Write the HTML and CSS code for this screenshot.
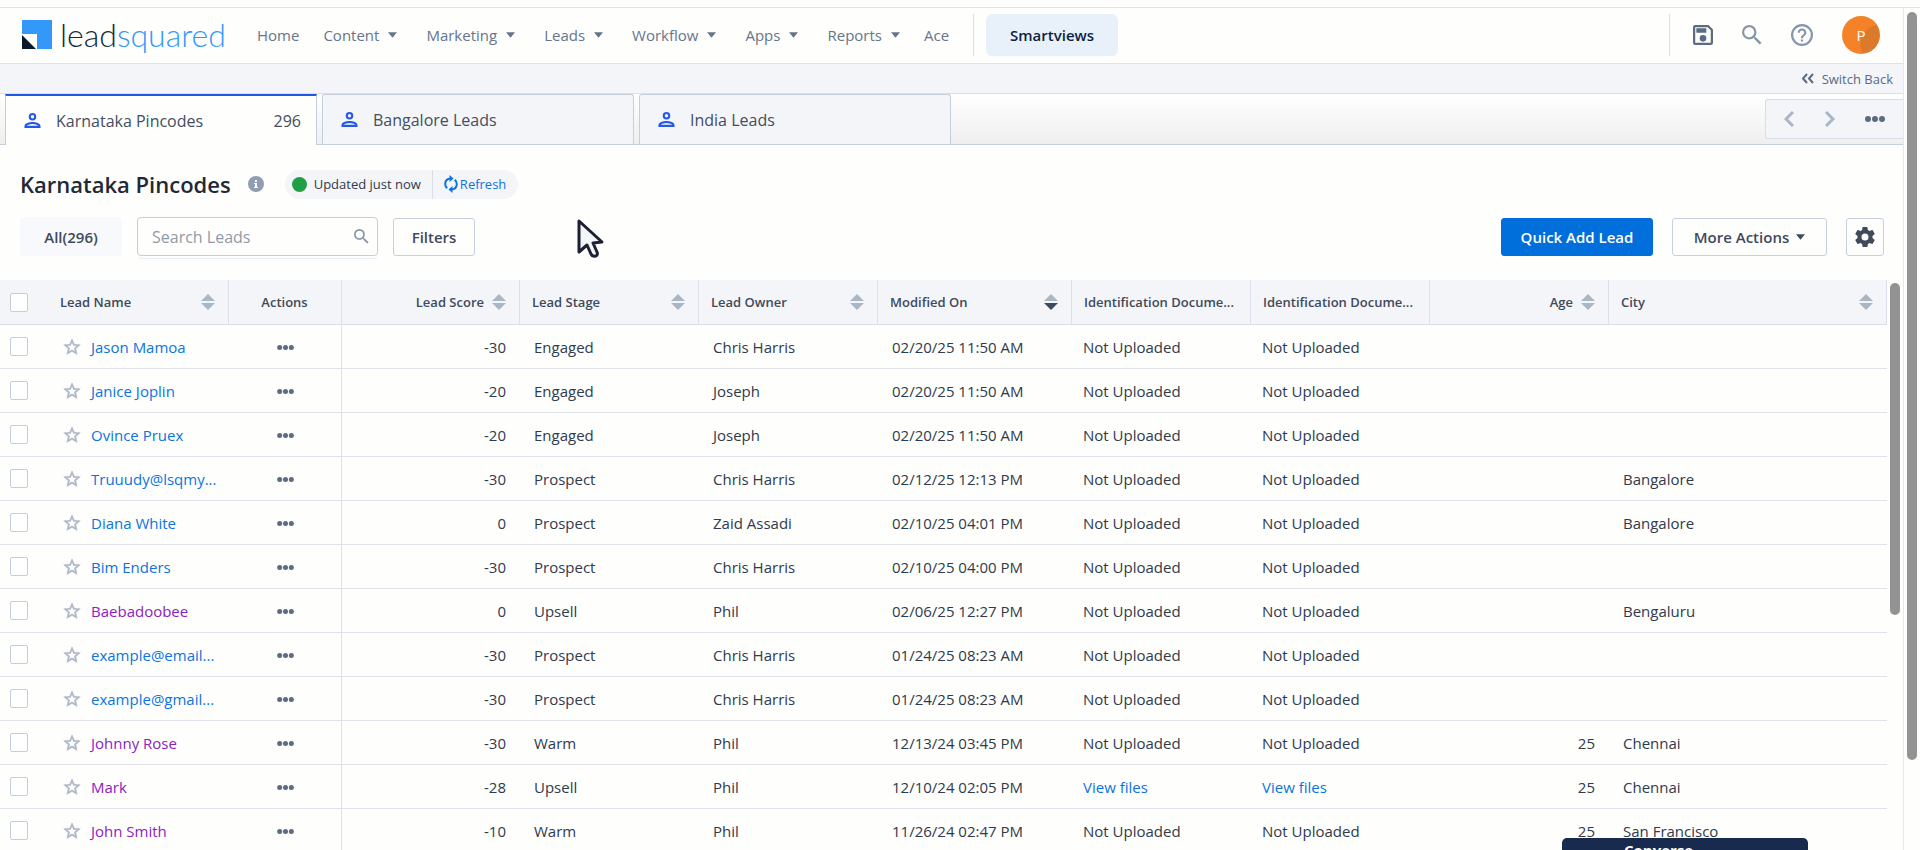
FILE: index.html
```html
<!DOCTYPE html>
<html lang="en">
<head>
<meta charset="UTF-8">
<meta name="viewport" content="width=device-width, initial-scale=1">
<title>Karnataka Pincodes - Smartviews</title>
<link rel="stylesheet" href="styles.css">
</head>
<body>

<!-- icon sprite -->
<svg class="sprite" aria-hidden="true">
  <symbol id="caret" viewBox="0 0 10 6"><path d="M0 0h10L5 6z"/></symbol>
  <symbol id="person" viewBox="0 0 18 18"><path d="M9 1a4 4 0 1 1 0 8 4 4 0 0 1 0-8zm0 2.200a1.800 1.800 0 1 0 0 3.600 1.800 1.800 0 0 0 0-3.600zM9 10.500c3.500 0 8.500 1.300 8.500 4.500v2H.5v-2c0-3.200 5-4.500 8.500-4.500zm0 2.200c-2.300 0-5 .8-6 1.800h12c-1-1-3.700-1.800-6-1.800z"/></symbol>
  <symbol id="star" viewBox="0 0 24 24"><path d="M22 9.240l-7.190-.62L12 2 9.190 8.630 2 9.240l5.460 4.730L5.820 21 12 17.270 18.180 21l-1.630-7.030L22 9.240zM12 15.400l-3.760 2.270 1-4.280-3.320-2.880 4.380-.38L12 6.100l1.710 4.040 4.380.38-3.320 2.880 1 4.280L12 15.400z" stroke="currentColor" stroke-width=".5"/></symbol>
  <symbol id="dots" viewBox="0 0 20 6"><circle cx="3" cy="3" r="3"/><circle cx="10" cy="3" r="3"/><circle cx="17" cy="3" r="3"/></symbol>
  <symbol id="sort" viewBox="0 0 14 18"><path d="M7 1l7 7H0z"/><path class="down" d="M7 17l7-7H0z"/></symbol>
  <symbol id="magnify" viewBox="3 3 18 18"><path d="M15.500 14h-.79l-.28-.27A6.470 6.470 0 0 0 16 9.500 6.500 6.500 0 1 0 9.500 16c1.610 0 3.090-.59 4.230-1.570l.27.28v.79l5 4.990L20.490 19l-4.990-5zm-6 0C7.010 14 5 11.990 5 9.500S7.010 5 9.500 5 14 7.010 14 9.500 11.990 14 9.500 14z"/></symbol>
</svg>

<div class="page">
  <div class="app">

    <header class="topbar">
      <a class="logo" href="#" aria-label="leadsquared">
        <svg width="30" height="29" viewBox="0 0 30 29"><path d="M0 0h30v29H15V14H0z" fill="#3498fb"/><path d="M0 15v14h14z" fill="#08192e"/></svg>
        <span class="wordmark">lead<span>squared</span></span>
      </a>
      <nav class="nav">
        <a href="#">Home</a>
        <a href="#" class="drop">Content <svg class="caret"><use href="#caret"/></svg></a>
        <a href="#" class="drop">Marketing <svg class="caret"><use href="#caret"/></svg></a>
        <a href="#" class="drop">Leads <svg class="caret"><use href="#caret"/></svg></a>
        <a href="#" class="drop">Workflow <svg class="caret"><use href="#caret"/></svg></a>
        <a href="#" class="drop">Apps <svg class="caret"><use href="#caret"/></svg></a>
        <a href="#" class="drop">Reports <svg class="caret"><use href="#caret"/></svg></a>
        <a href="#">Ace</a>
      </nav>
      <div class="smart"><a href="#" class="smart-link">Smartviews</a></div>
      <div class="tools">
        <button class="icon-btn dark" aria-label="Save"><svg width="20" height="20" viewBox="3 3 18 18"><path d="M17 3H5a2 2 0 0 0-2 2v14a2 2 0 0 0 2 2h14a2 2 0 0 0 2-2V7zM5 5h11.200L19 7.800V19H5zM6 6h9v4H6zM12 12a3 3 0 1 0 0 6 3 3 0 0 0 0-6z" fill-rule="evenodd"/></svg></button>
        <button class="icon-btn" aria-label="Search"><svg width="20" height="20"><use href="#magnify"/></svg></button>
        <button class="icon-btn" aria-label="Help"><svg width="22" height="22" viewBox="2 2 20 20"><path d="M11 18h2v-2h-2v2zm1-16a10 10 0 1 0 0 20 10 10 0 0 0 0-20zm0 18a8 8 0 1 1 0-16 8 8 0 0 1 0 16zm0-14a4 4 0 0 0-4 4h2c0-1.100.9-2 2-2s2 .9 2 2c0 2-3 1.750-3 5h2c0-2.250 3-2.500 3-5a4 4 0 0 0-4-4z"/></svg></button>
        <button class="avatar">P</button>
      </div>
    </header>

    <div class="switch">
      <a href="#"><svg width="13" height="11" viewBox="0 0 13 11"><path d="M6 1L2 5.500 6 10M12 1L8 5.500l4 4.500" fill="none" stroke="currentColor" stroke-width="2"/></svg>Switch Back</a>
    </div>

    <div class="tabs">
      <a href="#" class="tab active"><svg class="person"><use href="#person"/></svg>Karnataka Pincodes<span class="count">296</span></a>
      <a href="#" class="tab"><svg class="person"><use href="#person"/></svg>Bangalore Leads</a>
      <a href="#" class="tab"><svg class="person"><use href="#person"/></svg>India Leads</a>
      <div class="tab-nav">
        <button aria-label="Previous"><svg width="10" height="16" viewBox="0 0 10 16"><path d="M9 1L2 8l7 7" fill="none" stroke="#a9b6c6" stroke-width="3"/></svg></button>
        <button aria-label="Next"><svg width="10" height="16" viewBox="0 0 10 16"><path d="M1 1l7 7-7 7" fill="none" stroke="#a9b6c6" stroke-width="3"/></svg></button>
        <button aria-label="More tabs"><svg width="20" height="6"><use href="#dots"/></svg></button>
      </div>
    </div>

    <main>
      <div class="title-row">
        <h1>Karnataka Pincodes</h1>
        <svg class="info" width="16" height="16" viewBox="0 0 16 16"><circle cx="8" cy="8" r="8" fill="#8f9eb0"/><path d="M7 4h2v2H7zM6 7h3v4h1v1H6v-1h1V8H6z" fill="#fff"/></svg>
        <div class="status">
          <span class="updated"><i class="dot"></i>Updated just now</span>
          <button class="refresh"><svg width="14" height="18" viewBox="0 0 14 18"><path d="M6 3.500C3 4 1.200 6.300 1.200 9c0 1.800.8 3.200 2 4.300M8 14.500c3-.5 4.800-2.800 4.800-5.500 0-1.800-.8-3.200-2-4.300" fill="none" stroke="currentColor" stroke-width="2"/><path d="M5.500 0l4 3.500-4 3.500zM8.500 18l-4-3.500 4-3.500z"/></svg>Refresh</button>
        </div>
      </div>

      <div class="toolbar">
        <button class="all">All(296)</button>
        <div class="search">
          <input type="text" placeholder="Search Leads" aria-label="Search Leads">
          <svg width="15" height="15"><use href="#magnify"/></svg>
        </div>
        <button class="btn filters">Filters</button>
        <div class="actions">
          <button class="btn primary">Quick Add Lead</button>
          <button class="btn more">More Actions <svg class="caret"><use href="#caret"/></svg></button>
          <button class="btn gear" aria-label="Settings"><svg width="20" height="20" viewBox="2 2 20 20"><path d="M19.430 12.980c.04-.32.07-.64.07-.98s-.03-.66-.07-.98l2.110-1.650c.19-.15.24-.42.12-.64l-2-3.460c-.12-.22-.39-.3-.61-.22l-2.490 1c-.52-.4-1.080-.73-1.690-.98l-.38-2.650A.49.49 0 0 0 14 2h-4c-.25 0-.46.18-.49.42l-.38 2.650c-.61.25-1.170.59-1.690.98l-2.490-1c-.23-.09-.49 0-.61.22l-2 3.460c-.13.22-.07.49.12.64l2.110 1.650c-.04.32-.07.65-.07.98s.03.66.07.98l-2.110 1.650c-.19.15-.24.42-.12.64l2 3.460c.12.22.39.3.61.22l2.490-1c.52.4 1.080.73 1.690.98l.38 2.650c.03.24.24.42.49.42h4c.25 0 .46-.18.49-.42l.38-2.650c.61-.25 1.170-.59 1.690-.98l2.490 1c.23.09.49 0 .61-.22l2-3.460c.12-.22.07-.49-.12-.64l-2.110-1.650zM12 15.500a3.500 3.500 0 1 1 0-7 3.500 3.500 0 0 1 0 7z"/></svg></button>
        </div>
      </div>

      <div class="grid">
        <table>
          <colgroup>
            <col class="c-name"><col class="c-actions"><col class="c-score"><col class="c-std"><col class="c-std"><col class="c-modified"><col class="c-std"><col class="c-std"><col class="c-std"><col>
          </colgroup>
          <thead>
            <tr>
              <th><div class="th"><input type="checkbox" aria-label="Select all"><span class="grow name-label">Lead Name</span><svg class="sort"><use href="#sort"/></svg></div></th>
              <th class="mid">Actions</th>
              <th><div class="th end">Lead Score<svg class="sort"><use href="#sort"/></svg></div></th>
              <th><div class="th"><span class="grow">Lead Stage</span><svg class="sort"><use href="#sort"/></svg></div></th>
              <th><div class="th"><span class="grow">Lead Owner</span><svg class="sort"><use href="#sort"/></svg></div></th>
              <th><div class="th"><span class="grow">Modified On</span><svg class="sort desc"><use href="#sort"/></svg></div></th>
              <th><div class="th">Identification Docume...</div></th>
              <th><div class="th">Identification Docume...</div></th>
              <th><div class="th end">Age<svg class="sort"><use href="#sort"/></svg></div></th>
              <th><div class="th"><span class="grow">City</span><svg class="sort"><use href="#sort"/></svg></div></th>
            </tr>
          </thead>
          <tbody>
            <tr>
              <td><div class="lead"><input type="checkbox" aria-label="Select Jason Mamoa"><svg class="star"><use href="#star"/></svg><a href="#">Jason Mamoa</a></div></td>
              <td class="mid"><button class="row-menu" aria-label="Row actions"><svg width="17" height="5"><use href="#dots"/></svg></button></td>
              <td class="num">-30</td><td>Engaged</td><td>Chris Harris</td><td>02/20/25 11:50 AM</td><td class="file">Not Uploaded</td><td class="file">Not Uploaded</td><td class="num"></td><td></td>
            </tr>
            <tr>
              <td><div class="lead"><input type="checkbox" aria-label="Select Janice Joplin"><svg class="star"><use href="#star"/></svg><a href="#">Janice Joplin</a></div></td>
              <td class="mid"><button class="row-menu" aria-label="Row actions"><svg width="17" height="5"><use href="#dots"/></svg></button></td>
              <td class="num">-20</td><td>Engaged</td><td>Joseph</td><td>02/20/25 11:50 AM</td><td class="file">Not Uploaded</td><td class="file">Not Uploaded</td><td class="num"></td><td></td>
            </tr>
            <tr>
              <td><div class="lead"><input type="checkbox" aria-label="Select Ovince Pruex"><svg class="star"><use href="#star"/></svg><a href="#">Ovince Pruex</a></div></td>
              <td class="mid"><button class="row-menu" aria-label="Row actions"><svg width="17" height="5"><use href="#dots"/></svg></button></td>
              <td class="num">-20</td><td>Engaged</td><td>Joseph</td><td>02/20/25 11:50 AM</td><td class="file">Not Uploaded</td><td class="file">Not Uploaded</td><td class="num"></td><td></td>
            </tr>
            <tr>
              <td><div class="lead"><input type="checkbox" aria-label="Select Truuudy"><svg class="star"><use href="#star"/></svg><a href="#">Truuudy@lsqmy...</a></div></td>
              <td class="mid"><button class="row-menu" aria-label="Row actions"><svg width="17" height="5"><use href="#dots"/></svg></button></td>
              <td class="num">-30</td><td>Prospect</td><td>Chris Harris</td><td>02/12/25 12:13 PM</td><td class="file">Not Uploaded</td><td class="file">Not Uploaded</td><td class="num"></td><td>Bangalore</td>
            </tr>
            <tr>
              <td><div class="lead"><input type="checkbox" aria-label="Select Diana White"><svg class="star"><use href="#star"/></svg><a href="#">Diana White</a></div></td>
              <td class="mid"><button class="row-menu" aria-label="Row actions"><svg width="17" height="5"><use href="#dots"/></svg></button></td>
              <td class="num">0</td><td>Prospect</td><td>Zaid Assadi</td><td>02/10/25 04:01 PM</td><td class="file">Not Uploaded</td><td class="file">Not Uploaded</td><td class="num"></td><td>Bangalore</td>
            </tr>
            <tr>
              <td><div class="lead"><input type="checkbox" aria-label="Select Bim Enders"><svg class="star"><use href="#star"/></svg><a href="#">Bim Enders</a></div></td>
              <td class="mid"><button class="row-menu" aria-label="Row actions"><svg width="17" height="5"><use href="#dots"/></svg></button></td>
              <td class="num">-30</td><td>Prospect</td><td>Chris Harris</td><td>02/10/25 04:00 PM</td><td class="file">Not Uploaded</td><td class="file">Not Uploaded</td><td class="num"></td><td></td>
            </tr>
            <tr>
              <td><div class="lead"><input type="checkbox" aria-label="Select Baebadoobee"><svg class="star"><use href="#star"/></svg><a href="#" class="seen">Baebadoobee</a></div></td>
              <td class="mid"><button class="row-menu" aria-label="Row actions"><svg width="17" height="5"><use href="#dots"/></svg></button></td>
              <td class="num">0</td><td>Upsell</td><td>Phil</td><td>02/06/25 12:27 PM</td><td class="file">Not Uploaded</td><td class="file">Not Uploaded</td><td class="num"></td><td>Bengaluru</td>
            </tr>
            <tr>
              <td><div class="lead"><input type="checkbox" aria-label="Select example@email"><svg class="star"><use href="#star"/></svg><a href="#">example@email...</a></div></td>
              <td class="mid"><button class="row-menu" aria-label="Row actions"><svg width="17" height="5"><use href="#dots"/></svg></button></td>
              <td class="num">-30</td><td>Prospect</td><td>Chris Harris</td><td>01/24/25 08:23 AM</td><td class="file">Not Uploaded</td><td class="file">Not Uploaded</td><td class="num"></td><td></td>
            </tr>
            <tr>
              <td><div class="lead"><input type="checkbox" aria-label="Select example@gmail"><svg class="star"><use href="#star"/></svg><a href="#">example@gmail...</a></div></td>
              <td class="mid"><button class="row-menu" aria-label="Row actions"><svg width="17" height="5"><use href="#dots"/></svg></button></td>
              <td class="num">-30</td><td>Prospect</td><td>Chris Harris</td><td>01/24/25 08:23 AM</td><td class="file">Not Uploaded</td><td class="file">Not Uploaded</td><td class="num"></td><td></td>
            </tr>
            <tr>
              <td><div class="lead"><input type="checkbox" aria-label="Select Johnny Rose"><svg class="star"><use href="#star"/></svg><a href="#" class="seen">Johnny Rose</a></div></td>
              <td class="mid"><button class="row-menu" aria-label="Row actions"><svg width="17" height="5"><use href="#dots"/></svg></button></td>
              <td class="num">-30</td><td>Warm</td><td>Phil</td><td>12/13/24 03:45 PM</td><td class="file">Not Uploaded</td><td class="file">Not Uploaded</td><td class="num">25</td><td>Chennai</td>
            </tr>
            <tr>
              <td><div class="lead"><input type="checkbox" aria-label="Select Mark"><svg class="star"><use href="#star"/></svg><a href="#" class="seen">Mark</a></div></td>
              <td class="mid"><button class="row-menu" aria-label="Row actions"><svg width="17" height="5"><use href="#dots"/></svg></button></td>
              <td class="num">-28</td><td>Upsell</td><td>Phil</td><td>12/10/24 02:05 PM</td><td class="file"><a href="#">View files</a></td><td class="file"><a href="#">View files</a></td><td class="num">25</td><td>Chennai</td>
            </tr>
            <tr>
              <td><div class="lead"><input type="checkbox" aria-label="Select John Smith"><svg class="star"><use href="#star"/></svg><a href="#" class="seen">John Smith</a></div></td>
              <td class="mid"><button class="row-menu" aria-label="Row actions"><svg width="17" height="5"><use href="#dots"/></svg></button></td>
              <td class="num">-10</td><td>Warm</td><td>Phil</td><td>11/26/24 02:47 PM</td><td class="file">Not Uploaded</td><td class="file">Not Uploaded</td><td class="num">25</td><td>San Francisco</td>
            </tr>
          </tbody>
        </table>
        <div class="grid-scroll"><div class="thumb"></div></div>
      </div>
    </main>
  </div>
  <div class="page-scroll"><div class="thumb"></div></div>
</div>

<button class="converse">Converse</button>

<svg class="pointer" width="28" height="42" viewBox="0 0 28 42"><path d="M3 3v31l8-7 4 9c2 4 8 2 6-2l-4-9 9-1z" fill="#f4f5f8" stroke="#1b2133" stroke-width="3" stroke-linejoin="round"/></svg>

</body>
</html>
```
FILE: styles.css
```css
* {
  box-sizing: border-box;
}
body {
  margin: 0;
  height: 100vh;
  overflow: hidden;
  display: flex;
  flex-direction: column;
  background: #fefefd;
  color: #2f3a4c;
  font-family: "Open Sans", "Noto Sans", sans-serif;
  font-size: 15px;
  line-height: 20px;
}
body::before {
  content: "";
  flex: none;
  height: 7px;
  border-bottom: 1px solid #e0e2e8;
}
a {
  color: #0b74dd;
  text-decoration: none;
}
button {
  font: inherit;
  color: inherit;
  background: none;
  border: 0;
  padding: 0;
}
svg {
  fill: currentColor;
  flex: none;
}
.sprite {
  position: absolute;
  width: 0;
  height: 0;
}
.page {
  display: flex;
  flex: 1;
  min-height: 0;
}
.app {
  flex: 1;
  min-width: 0;
  overflow: hidden;
  border-right: 1px solid #e8e9ee;
}

/* top bar */
.topbar {
  display: flex;
  align-items: center;
  height: 56px;
  padding: 0 23px 2px 22px;
  border-bottom: 1px solid #dce3ee;
}
.logo {
  display: flex;
  align-items: center;
  gap: 8px;
  width: 235px;
}
.wordmark {
  font-family: Lato, sans-serif;
  font-weight: 300;
  font-size: 32px;
  line-height: 32px;
  color: #12283f;
}
.wordmark span {
  color: #3498fb;
}
.nav {
  display: flex;
  gap: 24px;
}
.nav a {
  display: flex;
  align-items: center;
  gap: 9px;
  color: #66758a;
}
.nav .drop + .drop {
  margin-left: 5px;
}
.caret {
  width: 9px;
  height: 6px;
}
.smart {
  margin-left: 24px;
  padding-left: 12px;
  border-left: 1px solid #d9deea;
}
.smart-link {
  display: block;
  padding: 11px 24px;
  border-radius: 6px;
  background: #e8f1f9;
  color: #0c1f3d;
  font-weight: 600;
}
.tools {
  display: flex;
  align-items: center;
  gap: 29px;
  height: 42px;
  margin-left: auto;
  padding-left: 23px;
  border-left: 1px solid #d9deea;
}
.icon-btn {
  display: flex;
  color: #8496ab;
}
.icon-btn.dark {
  color: #5a6b82;
}
.avatar {
  width: 38px;
  height: 38px;
  border-radius: 50%;
  background: radial-gradient(circle at 38px 28px, #dc7a2c 19px, #f58228 20px);
  color: #fff;
}

.switch {
  display: flex;
  justify-content: flex-end;
  align-items: center;
  height: 30px;
  padding-right: 10px;
  background: #f4f5f9;
  border-bottom: 1px solid #dcdfea;
}
.switch a {
  display: flex;
  align-items: center;
  gap: 8px;
  color: #5a6b82;
  font-size: 13px;
}

/* tabs */
.tabs {
  display: flex;
  align-items: flex-end;
  gap: 5px;
  height: 51px;
  padding-left: 5px;
  background: linear-gradient(#fff, #f0efef);
  border-bottom: 1px solid #c5cfdc;
}
.tab {
  display: flex;
  align-items: center;
  gap: 15px;
  width: 312px;
  height: 50px;
  padding: 0 15px 0 18px;
  background: #f4f5f9;
  border: 1px solid #c5cfdc;
  border-bottom: 0;
  border-radius: 3px 3px 0 0;
  color: #434e5f;
  font-size: 16px;
}
.tab.active {
  height: 51px;
  margin-bottom: -1px;
  background: #fefefd;
  border-top: 2px solid #1f57e7;
  border-radius: 0;
}
.person {
  width: 17px;
  height: 17px;
  color: #2559ea;
}
.count {
  margin-left: auto;
}
.tab-nav {
  display: flex;
  align-self: center;
  align-items: center;
  justify-content: space-between;
  width: 138px;
  height: 40px;
  margin-left: auto;
  padding: 0 18px;
  background: #f4f5f9;
  border: 1px solid #d5deea;
  border-right: 0;
  border-radius: 3px 0 0 3px;
  color: #5a6b82;
}
.tab-nav button {
  display: flex;
}

/* title + toolbar */
.title-row {
  display: flex;
  align-items: center;
  padding: 24px 0 0 20px;
}
h1 {
  margin: 0;
  font-size: 22px;
  line-height: 30px;
  font-weight: 600;
  color: #1f2937;
}
.info {
  margin: 0 21px 0 17px;
}
.status {
  display: flex;
  align-items: center;
  height: 29px;
  border-radius: 15px;
  background: #f4f5f9;
  font-size: 13px;
}
.updated,
.refresh {
  display: flex;
  align-items: center;
  height: 29px;
}
.updated {
  gap: 7px;
  padding: 0 11px 0 7px;
  border-right: 1px solid #d9dfe9;
}
.dot {
  width: 15px;
  height: 15px;
  border-radius: 50%;
  background: #1fa045;
}
.refresh {
  gap: 2px;
  padding: 0 12px 0 11px;
  color: #0b74dd;
}
.toolbar {
  display: flex;
  align-items: center;
  gap: 15px;
  padding: 18px 19px 24px 20px;
}
.all {
  width: 102px;
  height: 39px;
  border-radius: 3px;
  background: #f8f9fc;
  color: #3f4a5b;
  font-weight: 600;
}
.search {
  display: flex;
  align-items: center;
  width: 241px;
  height: 39px;
  padding: 0 8px 0 14px;
  border: 1px solid #c1cedc;
  border-radius: 4px;
  box-shadow: 0 3px 0 -1px #fefefd, 0 4px 0 -1px #e4eef7;
  color: #8496a5;
}
.search input {
  flex: 1;
  min-width: 0;
  padding: 0;
  border: 0;
  outline: 0;
  background: none;
  font: inherit;
  font-size: 16px;
}
.search input::placeholder {
  color: #8f9ba8;
}
.btn {
  height: 38px;
  border: 1px solid #c5d1de;
  border-radius: 3px;
  color: #3f4a5b;
  font-weight: 600;
}
.filters {
  width: 82px;
}
.actions {
  display: flex;
  gap: 19px;
  margin-left: auto;
}
.primary {
  width: 152px;
  border-color: #006fdb;
  background: #006fdb;
  color: #fff;
}
.more {
  display: flex;
  align-items: center;
  justify-content: center;
  gap: 7px;
  width: 155px;
}
.gear {
  display: flex;
  align-items: center;
  justify-content: center;
  width: 38px;
}

/* leads grid */
.grid {
  display: flex;
}
table {
  flex: 1;
  width: 100%;
  min-width: 0;
  table-layout: fixed;
  border-collapse: separate;
  border-spacing: 0;
}
.c-name {
  width: 229px;
}
.c-actions {
  width: 113px;
}
.c-score {
  width: 178px;
}
.c-std {
  width: 179px;
}
.c-modified {
  width: 194px;
}
th {
  height: 45px;
  padding: 0 13px 0 12px;
  background: #f4f5f9;
  border-right: 1px solid #dcdfea;
  border-bottom: 1px solid #dcdfea;
  color: #3f4a5b;
  font-size: 13px;
  font-weight: 600;
  text-align: left;
  white-space: nowrap;
}
th:first-child,
td:first-child {
  padding-left: 10px;
}
.th {
  display: flex;
  align-items: center;
  gap: 8px;
}
.end {
  justify-content: flex-end;
}
.grow {
  flex: 1;
}
.name-label {
  padding-left: 24px;
}
.sort {
  width: 14px;
  height: 18px;
  color: #a9b7c5;
}
.sort.desc {
  --down: #3f4a5b;
}
.down {
  fill: var(--down, currentColor);
}
td {
  height: 44px;
  padding: 0 14px;
  border-bottom: 1px solid #dfe1eb;
  white-space: nowrap;
}
.mid {
  text-align: center;
}
td.mid {
  border-right: 1px solid #dcdfea;
}
.num {
  text-align: right;
}
.file {
  padding: 0 11px;
}
.lead {
  display: flex;
  align-items: center;
}
input[type="checkbox"] {
  appearance: none;
  flex: none;
  width: 18px;
  height: 19px;
  margin: 0;
  border: 1px solid #c3cedd;
  border-radius: 2px;
  background: #fff;
}
.star {
  width: 20px;
  height: 20px;
  margin: 0 9px 0 34px;
  color: #a9b6c6;
}
.seen {
  color: #8a22c2;
}
.row-menu {
  display: inline-flex;
  align-items: center;
  height: 20px;
  vertical-align: middle;
  color: #5a6b82;
}
.grid-scroll {
  flex: none;
  width: 16px;
  padding: 3px 3px 0;
}
.grid-scroll .thumb {
  height: 332px;
}
.page-scroll {
  width: 16px;
  padding: 4px 3px 0;
}
.page-scroll .thumb {
  height: 88vh;
}
.thumb {
  border-radius: 5px;
  background: #939393;
}

.converse {
  position: fixed;
  right: 112px;
  bottom: -12px;
  width: 246px;
  height: 24px;
  padding: 0 0 0 62px;
  border-radius: 5px;
  background: #182b4f;
  color: #fff;
  font-weight: 700;
  text-align: left;
}
.pointer {
  position: absolute;
  left: 576px;
  top: 218px;
}
```
